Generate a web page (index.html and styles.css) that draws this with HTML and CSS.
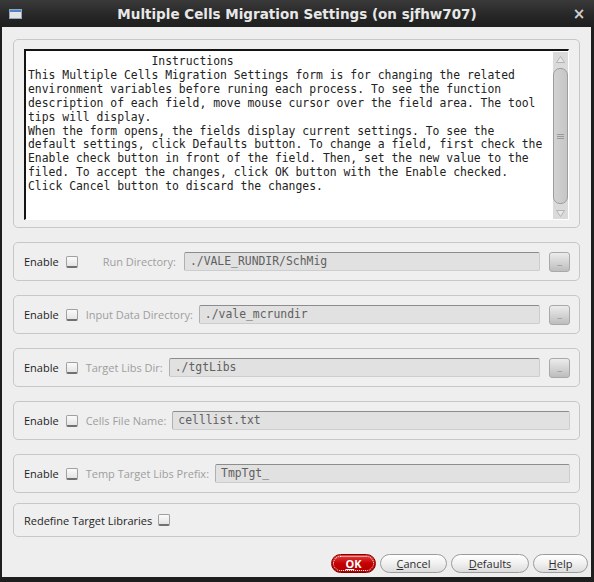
FILE: index.html
```html
<!DOCTYPE html>
<html>
<head>
<meta charset="utf-8">
<link rel="stylesheet" href="styles.css">
</head>
<body>
<div class="window">
  <div class="titlebar">
    <span class="app-icon"><span class="app-icon-bar"></span></span>
    <span class="title">Multiple Cells Migration Settings (on sjfhw707)</span>
    <span class="close">×</span>
  </div>
  <div class="client">
    <div class="frame instr">
      <div class="textbox">
<pre class="text">                  Instructions
This Multiple Cells Migration Settings form is for changing the related
environment variables before runing each process. To see the function
description of each field, move mouse cursor over the field area. The tool
tips will display.
When the form opens, the fields display current settings. To see the
default settings, click Defaults button. To change a field, first check the
Enable check button in front of the field. Then, set the new value to the
filed. To accept the changes, click OK button with the Enable checked.
Click Cancel button to discard the changes.</pre>
        <div class="vscroll">
          <div class="arrow up"><svg width="15" height="15" viewBox="0 0 15 15"><polygon points="3.5,10.5 7.5,4.5 11.5,10.5" fill="#e8e8e8" stroke="#b4b4b4" stroke-width="1"/></svg></div>
          <div class="thumb"><span class="grip"></span></div>
          <div class="arrow down"><svg width="15" height="12" viewBox="0 0 15 12"><polygon points="3.5,3.5 11.5,3.5 7.5,9.5" fill="#e8e8e8" stroke="#b4b4b4" stroke-width="1"/></svg></div>
        </div>
      </div>
    </div>

    <div class="frame row">
      <span class="enable">Enable</span><span class="check"></span>
      <span class="lbl lbl-run">Run Directory:</span>
      <span class="field field-run">./VALE_RUNDIR/SchMig</span>
      <span class="browse">...</span>
    </div>

    <div class="frame row">
      <span class="enable">Enable</span><span class="check"></span>
      <span class="lbl">Input Data Directory:</span>
      <span class="field">./vale_mcrundir</span>
      <span class="browse">...</span>
    </div>

    <div class="frame row">
      <span class="enable">Enable</span><span class="check"></span>
      <span class="lbl">Target Libs Dir:</span>
      <span class="field">./tgtLibs</span>
      <span class="browse">...</span>
    </div>

    <div class="frame row">
      <span class="enable">Enable</span><span class="check"></span>
      <span class="lbl">Cells File Name:</span>
      <span class="field">celllist.txt</span>
    </div>

    <div class="frame row">
      <span class="enable">Enable</span><span class="check"></span>
      <span class="lbl">Temp Target Libs Prefix:</span>
      <span class="field">TmpTgt_</span>
    </div>

    <div class="frame row redefine">
      <span class="enable">Redefine Target Libraries</span><span class="check check-after"></span>
    </div>

    <div class="buttons">
      <span class="btn btn-ok"><u>O</u>K</span>
      <span class="btn btn-cancel"><u>C</u>ancel</span>
      <span class="btn btn-defaults"><u>D</u>efaults</span>
      <span class="btn btn-help"><u>H</u>elp</span>
    </div>
  </div>
</div>
</body>
</html>
```

FILE: styles.css
```css
html, body {
  margin: 0;
  padding: 0;
  background: #222;
}

.window {
  width: 594px;
  height: 582px;
  display: flex;
  flex-direction: column;
  background: #1e1e1e;
  overflow: hidden;
}

.titlebar {
  height: 27px;
  flex: none;
  display: grid;
  grid-template-columns: 30px 1fr 30px;
  align-items: center;
  background: linear-gradient(#3a3a3a, #262626 60%, #1f1f1f);
}

.app-icon {
  justify-self: start;
  margin-left: 9px;
  width: 13px;
  height: 10px;
  box-sizing: border-box;
  border: 1px solid #8fa7c4;
  background: #e4e4e4;
  display: flex;
  flex-direction: column;
}

.app-icon-bar {
  height: 2px;
  background: #4d84c8;
}

.title {
  text-align: center;
  font-family: "DejaVu Sans", sans-serif;
  font-weight: bold;
  font-size: 13.5px;
  color: #e8e8e8;
  white-space: nowrap;
}

.close {
  text-align: center;
  font-family: "DejaVu Sans", sans-serif;
  font-weight: bold;
  font-size: 15px;
  color: #cfcfcf;
}

.client {
  flex: 1;
  margin: 0 3px 5px 2px;
  background: #eeeeee;
  padding: 12px 11px 0 11px;
  display: flex;
  flex-direction: column;
  font-family: "Open Sans", sans-serif;
  font-size: 11px;
}

.frame {
  border: 1px solid #c7c7c7;
  border-radius: 5px;
  background: #efefef;
  box-sizing: border-box;
}

.instr {
  height: 189px;
  padding: 9px 10px 7px 10px;
  display: flex;
}

.textbox {
  flex: 1;
  display: flex;
  background: #ffffff;
  border-top: 2px solid #141414;
  border-left: 2px solid #141414;
  border-right: 1px solid #ffffff;
  border-bottom: 1px solid #ffffff;
  min-width: 0;
}

.text {
  flex: 1;
  margin: 0;
  padding: 4px 2px;
  font-family: "DejaVu Sans Mono", monospace;
  font-size: 11.4px;
  line-height: 13.9px;
  color: #222222;
  white-space: pre;
  overflow: hidden;
}

.vscroll {
  width: 15px;
  margin-top: 1px;
  background: #dadada;
  display: flex;
  flex-direction: column;
}

.arrow {
  display: flex;
  justify-content: center;
}

.arrow.up { height: 15px; }
.arrow.down { height: 12px; }

.thumb {
  flex: 1;
  margin: 1px 0 3px 0;
  border: 1px solid #9d9d9d;
  border-radius: 7px;
  background: linear-gradient(90deg, #d2d2d2, #c6c6c6);
  display: flex;
  align-items: center;
  justify-content: center;
}

.grip {
  width: 7px;
  height: 5px;
  background: repeating-linear-gradient(#9a9a9a 0 1px, transparent 1px 2px);
}

.row {
  height: 39px;
  margin-top: 14px;
  padding: 0 9px 0 10px;
  display: flex;
  align-items: center;
}

.redefine {
  height: 34px;
  margin-top: 10px;
}

.enable {
  color: #1e1e1e;
  white-space: nowrap;
}

.check {
  flex: none;
  width: 12px;
  height: 12px;
  margin-left: 7px;
  box-sizing: border-box;
  border: 1px solid #a0a0a0;
  border-bottom: 2px solid #707070;
  border-radius: 2px;
  background: linear-gradient(#fbfbfb, #e4e4e4);
}

.check-after {
  margin-left: 6px;
}

.lbl {
  margin-left: 8px;
  color: #9e9e9e;
  white-space: nowrap;
}

.lbl-run {
  margin-left: 25px;
}

.field {
  flex: 1;
  min-width: 0;
  margin-left: 6px;
  height: 19px;
  box-sizing: border-box;
  background: #e1e1e1;
  border: 1px solid #cdcdcd;
  border-top-color: #8c8c8c;
  border-left-color: #b0b0b0;
  border-radius: 2px;
  padding-left: 5px;
  font-family: "DejaVu Sans Mono", monospace;
  font-size: 11.4px;
  line-height: 17px;
  color: #606060;
  white-space: nowrap;
  overflow: hidden;
}

.field-run {
  margin-left: 8px;
}

.browse {
  flex: none;
  width: 21px;
  height: 20px;
  margin-left: 9px;
  box-sizing: border-box;
  border: 1px solid #a9a9a9;
  border-radius: 3px;
  background: linear-gradient(#ececec, #bdbdbd);
  font-size: 8px;
  line-height: 20px;
  color: #7a7a7a;
  text-align: center;
  letter-spacing: -0.5px;
}

.buttons {
  margin-top: 17px;
  margin-right: -8px;
  display: flex;
  justify-content: flex-end;
  gap: 4px;
}

.btn {
  height: 19px;
  box-sizing: border-box;
  border: 1px solid #9c9c9c;
  border-radius: 10px;
  background: linear-gradient(#ffffff, #f2f2f2 45%, #dcdcdc);
  color: #2e2e2e;
  font-size: 11px;
  line-height: 17px;
  text-align: center;
}

.btn-ok {
  width: 45px;
  border-color: #860000;
  background: linear-gradient(#e44040, #c40000 50%, #b00000);
  color: #ffffff;
  font-weight: bold;
  outline: 1px dotted #ffffff;
  outline-offset: -3px;
}

.btn-cancel { width: 67px; }
.btn-defaults { width: 78px; }
.btn-help { width: 55px; }
```
